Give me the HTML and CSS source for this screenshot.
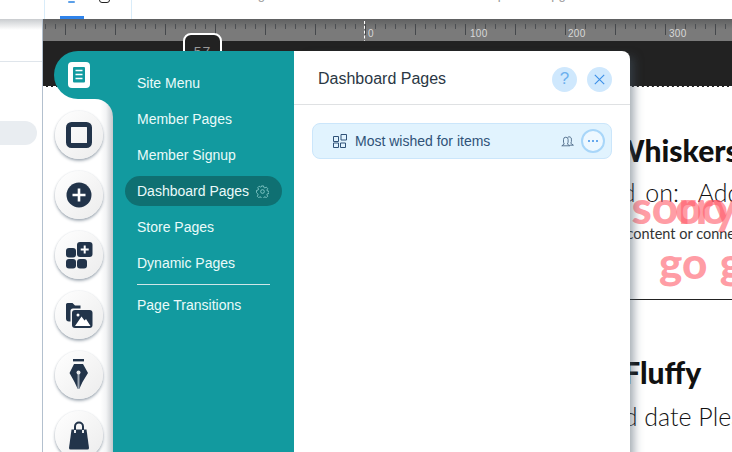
FILE: index.html
```html
<!DOCTYPE html>
<html lang="en">
<head>
<meta charset="utf-8">
<title>Dashboard Pages</title>
<link rel="stylesheet" href="styles.css">
</head>
<body>
<div class="app">
  <header class="topbar">
    <div class="tab-slot">
      <span class="tab-glyph"></span>
      <span class="tab-box"></span>
      <span class="tab-marker"></span>
    </div>
    <nav class="topnav">
      <span class="nav-site">Site</span>
      <span class="nav-settings">Settings</span>
      <span class="nav-dev">Dev Mode</span>
      <span class="nav-hire">Hire a Pro</span>
      <span class="nav-help">Help</span>
      <span class="nav-upgrade">Upgrade</span>
    </nav>
  </header>
  <div class="workspace">
    <aside class="sidebar">
      <div class="sidebar-head"></div>
      <div class="sidebar-pill"></div>
    </aside>
    <main class="canvas">
      <div class="ruler">
        <span class="ruler-zero">0</span>
        <span class="ruler-label l100">100</span>
        <span class="ruler-label l200">200</span>
        <span class="ruler-label l300">300</span>
      </div>
      <div class="strip">
        <span class="zoom-badge">57</span>
      </div>
      <div class="page">
        <div class="entry entry-first">
          <div class="pet-name">Mr Whiskers</div>
          <div class="pet-date date-whiskers">Added on:&nbsp; Add date</div>
          <div class="pet-note">Add your content or connect it</div>
        </div>
        <div class="rule"></div>
        <div class="entry entry-second">
          <div class="pet-name name-fluffy">Mr Fluffy</div>
          <div class="pet-date date-fluffy">Added date Please</div>
        </div>
        <div class="oops oops-a">Oopsy'sorry</div>
        <div class="oops oops-b">oo</div>
        <div class="oops oops-go">go go</div>
      </div>
    </main>
  </div>

  <section class="panel">
    <div class="rail">
      <div class="rail-tab">
        <svg class="ico-pages" width="22" height="26" viewBox="0 0 22 26">
          <rect width="22" height="26" rx="4" fill="#fff"/>
          <rect x="5" y="5" width="12" height="15.500" rx="1" fill="#129a9f"/>
          <path d="M7.500 8.500h7M7.500 12.500h7M7.500 16.500h7" stroke="#fff" stroke-width="1.600" fill="none"/>
        </svg>
      </div>
      <div class="rail-body">
        <div class="tool">
          <svg width="26" height="26" viewBox="0 0 26 26"><rect x="2.500" y="2.500" width="21" height="21" rx="3" fill="none" stroke="#22344a" stroke-width="5"/></svg>
        </div>
        <div class="tool">
          <svg width="26" height="26" viewBox="0 0 26 26"><circle cx="13" cy="13" r="12.500" fill="#22344a"/><path d="M13 6.500v13M6.500 13h13" stroke="#fff" stroke-width="2.600"/></svg>
        </div>
        <div class="tool">
          <svg width="27" height="27" viewBox="0 0 27 27">
            <rect x="0" y="6" width="10" height="9.500" rx="3" fill="#22344a"/>
            <rect x="11" y="0" width="15.500" height="15" rx="3" fill="#22344a"/>
            <rect x="0" y="17" width="10" height="9.500" rx="3" fill="#22344a"/>
            <rect x="11" y="17" width="10" height="9.500" rx="3" fill="#22344a"/>
            <path d="M18.700 3.500v8M14.700 7.500h8" stroke="#fff" stroke-width="2"/>
          </svg>
        </div>
        <div class="tool">
          <svg width="27" height="27" viewBox="0 0 27 27">
            <path d="M0 2.500A1.500 1.500 0 0 1 1.500 1h5l2.500 2.500h5.500v3H7A2.500 2.500 0 0 0 4.500 9v10.500H3A3 3 0 0 1 0 16.500z" fill="#22344a"/>
            <rect x="6" y="8" width="20.500" height="18" rx="3" fill="#22344a"/>
            <circle cx="12" cy="13" r="1.500" fill="#fff"/>
            <path d="M9 24l6.500-9.500 3 4 1.500-1.500 4.500 7z" fill="#fff"/>
          </svg>
        </div>
        <div class="tool">
          <svg width="20" height="32" viewBox="0 0 20 32">
            <rect x="4" y="0" width="11" height="2.400" fill="#22344a"/>
            <path d="M5 5h9l5 9-5.500 9-3 6.500h-2L5.500 23 0.500 14z" fill="#22344a"/>
            <path d="M9.500 13v17" stroke="#9aa5b1" stroke-width="2"/>
            <circle cx="9.500" cy="13.500" r="2" fill="#e8eaec"/>
          </svg>
        </div>
        <div class="tool">
          <svg width="22" height="29" viewBox="0 0 22 29">
            <path d="M3.500 8.500h15L21 27a1.500 1.500 0 0 1-1.500 1.500h-17A1.500 1.500 0 0 1 1 27z" fill="#22344a"/>
            <path d="M7 12V5.500a4 4 0 0 1 8 0V12" fill="none" stroke="#22344a" stroke-width="2"/>
            <path d="M7 9v3M15 9v3" stroke="#e8eaec" stroke-width="2"/>
          </svg>
        </div>
      </div>
    </div>
    <ul class="menu">
      <li class="menu-item">Site Menu</li>
      <li class="menu-item">Member Pages</li>
      <li class="menu-item">Member Signup</li>
      <li class="menu-item is-active">Dashboard Pages
        <svg class="gear" width="13" height="13" viewBox="0 0 14 14">
          <path d="M5.900 1h2.200l.4 1.700 1.100.5 1.500-.9 1.500 1.600-.9 1.500.5 1 1.800.5v2.200l-1.800.4-.5 1.100.9 1.500-1.500 1.500-1.500-.9-1.100.5-.4 1.700H5.900l-.4-1.700-1.100-.5-1.500.9-1.500-1.500.9-1.500-.5-1.100L.5 8.100V5.900l1.800-.5.5-1-.9-1.500 1.500-1.600 1.500.9 1.100-.5z" fill="none" stroke="#8ccfce" stroke-width=".9"/>
          <circle cx="7" cy="7" r="2" fill="none" stroke="#8ccfce" stroke-width=".9"/>
        </svg>
      </li>
      <li class="menu-item">Store Pages</li>
      <li class="menu-item">Dynamic Pages</li>
      <li class="menu-divider"></li>
      <li class="menu-item">Page Transitions</li>
    </ul>
    <div class="detail">
      <div class="detail-head">
        <h1 class="detail-title">Dashboard Pages</h1>
        <button class="round-btn" type="button">?</button>
        <button class="round-btn" type="button">
          <svg width="11" height="11" viewBox="0 0 11 11"><path d="M.8.800l9.400 9.400M10.200.800L.8 10.200" stroke="#3b8fe8" stroke-width="1.100" fill="none"/></svg>
        </button>
      </div>
      <div class="detail-body">
        <div class="page-row">
          <svg class="row-icon" width="14" height="14" viewBox="0 0 14 14">
            <path d="M.5 2.500h5v5h-5zM.5 9h5v4.500h-5zM7.500 9h5v4.500h-5zM8 .5h5.500v5.500H8z" fill="none" stroke="#2f5278" stroke-width="1"/>
          </svg>
          <span class="row-label">Most wished for items</span>
          <svg class="row-members" width="13" height="12" viewBox="0 0 13 12">
            <path d="M.8 10.800l2.400-1.700-.7-1.900V4.500a2.300 2.300 0 0 1 4.600 0v2.700l-.7 1.900 2.400 1.700zM6.800 2.300a2.200 2.200 0 0 1 3.600 1.800v2.500l-.6 1.700 2.600 1.900H8.700" fill="none" stroke="#4d6a88" stroke-width=".9"/>
          </svg>
          <span class="row-more"><i></i><i></i><i></i></span>
        </div>
      </div>
    </div>
  </section>
</div>
</body>
</html>
```
FILE: styles.css
```css
* { box-sizing: border-box; }
html, body { margin: 0; padding: 0; }
body {
  width: 732px;
  height: 452px;
  overflow: hidden;
  background: #fff;
  font-family: "Liberation Sans", Arial, sans-serif;
}
.app {
  position: relative;
  width: 732px;
  height: 452px;
  overflow: hidden;
  display: flex;
  flex-direction: column;
}

/* top bar */
.topbar {
  height: 19px;
  flex: none;
  display: flex;
  padding-left: 44px;
  background: #fff;
  overflow: hidden;
}
.tab-slot {
  position: relative;
  width: 88px;
  border-left: 1px solid #d9ecf9;
  border-right: 1px solid #d9ecf9;
}
.tab-glyph {
  position: absolute;
  left: 23px;
  top: 1px;
  width: 7px;
  height: 2px;
  border-radius: 1px;
  background: #5b9fe8;
}
.tab-box {
  position: absolute;
  left: 54px;
  top: -8px;
  width: 11px;
  height: 11px;
  border: 1.500px solid #222;
  border-radius: 3px;
}
.tab-marker {
  position: absolute;
  left: 15px;
  bottom: 0;
  width: 24px;
  height: 3px;
  background: #2f83ea;
}
.topnav {
  display: flex;
  margin-top: -13px;
  font-size: 13px;
  line-height: 15px;
  color: #999;
  white-space: nowrap;
}
.nav-site { margin-left: 36px; }
.nav-settings { margin-left: 34px; }
.nav-dev { margin-left: 24px; }
.nav-hire { margin-left: 22px; }
.nav-help { margin-left: 43px; }
.nav-upgrade { margin-left: 37px; }

/* workspace */
.workspace {
  flex: 1;
  display: flex;
  min-height: 0;
}
.sidebar {
  width: 43px;
  flex: none;
  border-right: 1px solid #b3c0ce;
  background: linear-gradient(#c9cccf, #fff 11px);
}
.sidebar-head {
  height: 43px;
  border-bottom: 1px solid #dfe5eb;
}
.sidebar-pill {
  width: 37px;
  height: 24px;
  margin-top: 59px;
  border-radius: 0 12px 12px 0;
  background: #e9edf1;
}
.canvas {
  flex: 1;
  min-width: 0;
  display: flex;
  flex-direction: column;
}
.ruler {
  position: relative;
  height: 22px;
  flex: none;
  color: #d8d8d8;
  background-color: #7a7a7a;
  background-image:
    repeating-linear-gradient(to right, #45484c 0 1px, transparent 1px 50px),
    repeating-linear-gradient(to right, #4c4f53 0 1px, transparent 1px 10px),
    linear-gradient(#5f6061, #7a7a7a 10px);
  background-size: 100% 11px, 100% 5px, 100% 100%;
  background-repeat: no-repeat;
  background-position: 22px 5px, 2px 5px, 0 0;
}
.ruler-zero,
.ruler-label {
  position: absolute;
  top: 10px;
  font-size: 10px;
  line-height: 10px;
  letter-spacing: .3px;
}
.ruler-zero {
  left: 321px;
  top: 2px;
  height: 32px;
  padding-left: 3px;
  border-left: 1px dashed #fff;
  line-height: 26px;
}
.l100 { left: 427px; }
.l200 { left: 525px; }
.l300 { left: 626px; }
.strip {
  position: relative;
  height: 46px;
  flex: none;
  background: #222;
  border-bottom: 1px dashed #fff;
}
.zoom-badge {
  position: absolute;
  left: 140px;
  top: -8px;
  width: 39px;
  height: 40px;
  border: 2px solid #fff;
  border-radius: 8px;
  background: #222;
  color: #999;
  font-size: 14px;
  line-height: 34px;
  text-align: center;
  letter-spacing: 1px;
}

/* site page beneath the panel */
.page {
  position: relative;
  flex: 1;
  min-height: 0;
  overflow: hidden;
  background: #fff;
  color: #111;
  font-family: Lato, sans-serif;
  white-space: nowrap;
}
.entry { padding-left: 300px; }
.entry-first { height: 212px; padding-top: 45px; }
.rule { height: 1px; margin-left: 500px; background: #222; }
.entry-second { padding-top: 54px; }
.pet-name {
  font-size: 30px;
  line-height: 36px;
  font-weight: 900;
  margin-left: 224px;
}
.pet-date {
  font-size: 25px;
  line-height: 30px;
  font-weight: 300;
  margin-top: 9px;
}
.date-whiskers { margin-left: 222px; word-spacing: 3px; }
.pet-note {
  font-size: 14.500px;
  line-height: 18px;
  font-weight: 400;
  margin-top: 18px;
  color: #333;
  margin-left: 222px;
}
.name-fluffy { margin-left: 234px; }
.date-fluffy { margin-left: 224px; margin-top: 11px; }
.oops {
  position: absolute;
  font-weight: 900;
  color: rgba(255, 90, 105, .6);
  line-height: 1;
}
.oops-a { left: 445px; top: 97px; font-size: 46px; }
.oops-b { left: 632px; top: 97px; font-size: 46px; }
.oops-go { left: 616px; top: 153px; font-size: 44px; word-spacing: 2px; }

/* overlay panel */
.panel {
  position: absolute;
  left: 54px;
  top: 51px;
  width: 576px;
  height: 420px;
  display: flex;
}
.rail {
  width: 59px;
  flex: none;
  display: flex;
  flex-direction: column;
  background: linear-gradient(to left, #129a9f 20px, transparent 20px);
}
.rail-tab {
  height: 48px;
  flex: none;
  display: flex;
  align-items: center;
  padding-left: 14px;
  border-radius: 24px 0 0 24px;
  background: #129a9f;
}
.ico-pages { display: block; }
.rail-body {
  flex: 1;
  display: flex;
  flex-direction: column;
  gap: 12px;
  padding: 12px 0 0 1px;
  border-radius: 0 18px 0 0;
  background: linear-gradient(to right, #fff 46px, #f3f4f5 52px, #c4c8cc);
}
.tool {
  width: 48px;
  height: 48px;
  flex: none;
  display: flex;
  align-items: center;
  justify-content: center;
  border-radius: 50%;
  background: linear-gradient(135deg, #fff, #ececec);
  box-shadow: 0 2px 3px rgba(60, 80, 100, .45), 0 0 2px rgba(60, 80, 100, .15);
}
.menu {
  width: 181px;
  flex: none;
  margin: 0;
  padding: 17px 12px 0;
  list-style: none;
  background: #129a9f;
  color: #eafafa;
  font-size: 14px;
}
.menu-item {
  display: flex;
  align-items: center;
  gap: 7px;
  height: 30px;
  margin-bottom: 6px;
  padding-left: 12px;
  border-radius: 15px;
  white-space: nowrap;
}
.is-active { background: #0f7072; }
.menu-divider {
  height: 1px;
  margin: 0 12px 5px;
  background: #cfe6e7;
}
.detail {
  flex: 1;
  min-width: 0;
  background: #fff;
  border-radius: 0 8px 0 0;
  box-shadow: 10px 0 10px -6px rgba(70, 85, 100, .5);
}
.detail-head {
  height: 54px;
  display: flex;
  align-items: center;
  gap: 10px;
  padding: 3px 18px 0 24px;
  border-bottom: 1px solid #dfe1e3;
}
.detail-title {
  flex: 1;
  margin: 0;
  font-size: 16px;
  font-weight: 400;
  color: #2a3744;
}
.round-btn {
  width: 25px;
  height: 25px;
  padding: 0;
  display: flex;
  align-items: center;
  justify-content: center;
  border: 0;
  border-radius: 50%;
  background: #cfe8fd;
  color: #6cb0ee;
  font-family: "Liberation Sans", Arial, sans-serif;
  font-size: 17px;
}
.detail-body { padding: 18px 18px 0; }
.page-row {
  height: 36px;
  display: flex;
  align-items: center;
  padding: 0 6px 0 20px;
  border: 1px solid #cbe6fb;
  border-radius: 8px;
  background: #e1f3fe;
}
.row-icon { flex: none; }
.row-label {
  flex: 1;
  margin-left: 8px;
  font-size: 14px;
  color: #2f5278;
}
.row-members { flex: none; margin-right: 7px; }
.row-more {
  width: 24px;
  height: 24px;
  flex: none;
  display: flex;
  align-items: center;
  justify-content: center;
  gap: 2px;
  border: 2px solid #a8d6f9;
  border-radius: 50%;
  background: #eef8ff;
}
.row-more i {
  width: 2px;
  height: 2px;
  border-radius: 50%;
  background: #3b8fe8;
}
```
